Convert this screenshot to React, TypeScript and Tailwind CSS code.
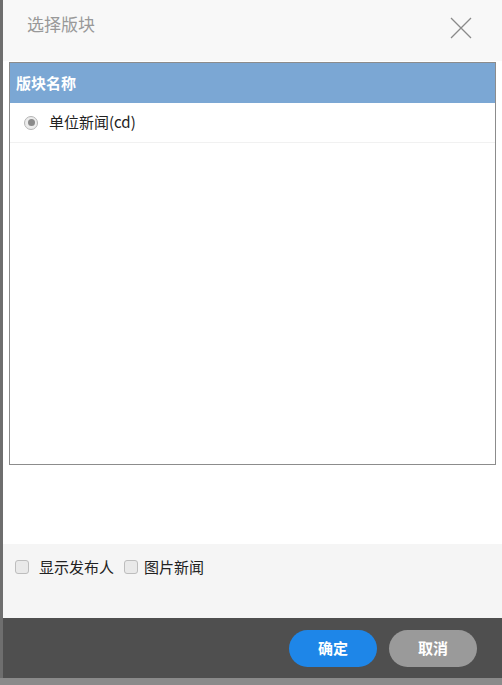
const font = { fontFamily: '"Noto Sans CJK SC", "Microsoft YaHei", sans-serif' };

const Radio = () => (
  <span className="flex h-[14px] w-[14px] items-center justify-center rounded-full border border-[#b5b5b5] bg-[#ececec]">
    <span className="h-[7px] w-[7px] rounded-full bg-[#8a8a8a]" />
  </span>
);

const Checkbox = () => (
  <span className="inline-block h-[14px] w-[14px] rounded-[3px] border border-[#bdbdbd] bg-[#e9e9e9]" />
);

const App = () => {
  return (
    <div className="flex h-[685px] w-[502px] flex-col bg-[#8a8a8a]" style={font}>
      <div className="flex h-[678px]">
        <div className="w-[3px] bg-[#6e6e6e]" />
        <div className="flex flex-1 flex-col bg-white">
          <div className="flex h-[61px] items-center justify-between bg-[#f8f8f8] pl-[24px] pr-[30px]">
            <span className="-mt-[14px] text-[17px] text-[#999]">选择版块</span>
            <svg width="22" height="22" viewBox="0 0 22 22" className="-mt-[6px]">
              <path d="M1 1 L21 21 M21 1 L1 21" stroke="#8a8a8a" strokeWidth="1.3" />
            </svg>
          </div>
          <div className="mx-[6px] mt-[1px] flex h-[403px] flex-col border border-[#8c8c8c]">
            <div className="flex h-[40px] items-center bg-[#7ba7d4] px-[6px] text-[15px] font-bold text-white">
              版块名称
            </div>
            <div className="flex h-[40px] items-center gap-[11px] border-b border-[#f1f1f1] pl-[14px] text-[15px] text-[#222]">
              <Radio />
              <span>单位新闻(cd)</span>
            </div>
          </div>
          <div className="flex-1" />
          <div className="flex h-[74px] items-start gap-[10px] bg-[#f5f5f5] pl-[12px] pt-[12px] text-[15px] text-[#222]">
            <label className="flex items-center gap-[10px]">
              <Checkbox />
              <span>显示发布人</span>
            </label>
            <label className="flex items-center gap-[6px]">
              <Checkbox />
              <span>图片新闻</span>
            </label>
          </div>
          <div className="flex h-[60px] items-center justify-end gap-[12px] bg-[#4f4f4f] pr-[25px]">
            <button className="h-[37px] w-[88px] rounded-full bg-[#1e86e8] text-[15px] font-semibold text-white">
              确定
            </button>
            <button className="h-[37px] w-[88px] rounded-full bg-[#9a9a9a] text-[15px] font-semibold text-white">
              取消
            </button>
          </div>
        </div>
      </div>
    </div>
  );
};

export default App;
